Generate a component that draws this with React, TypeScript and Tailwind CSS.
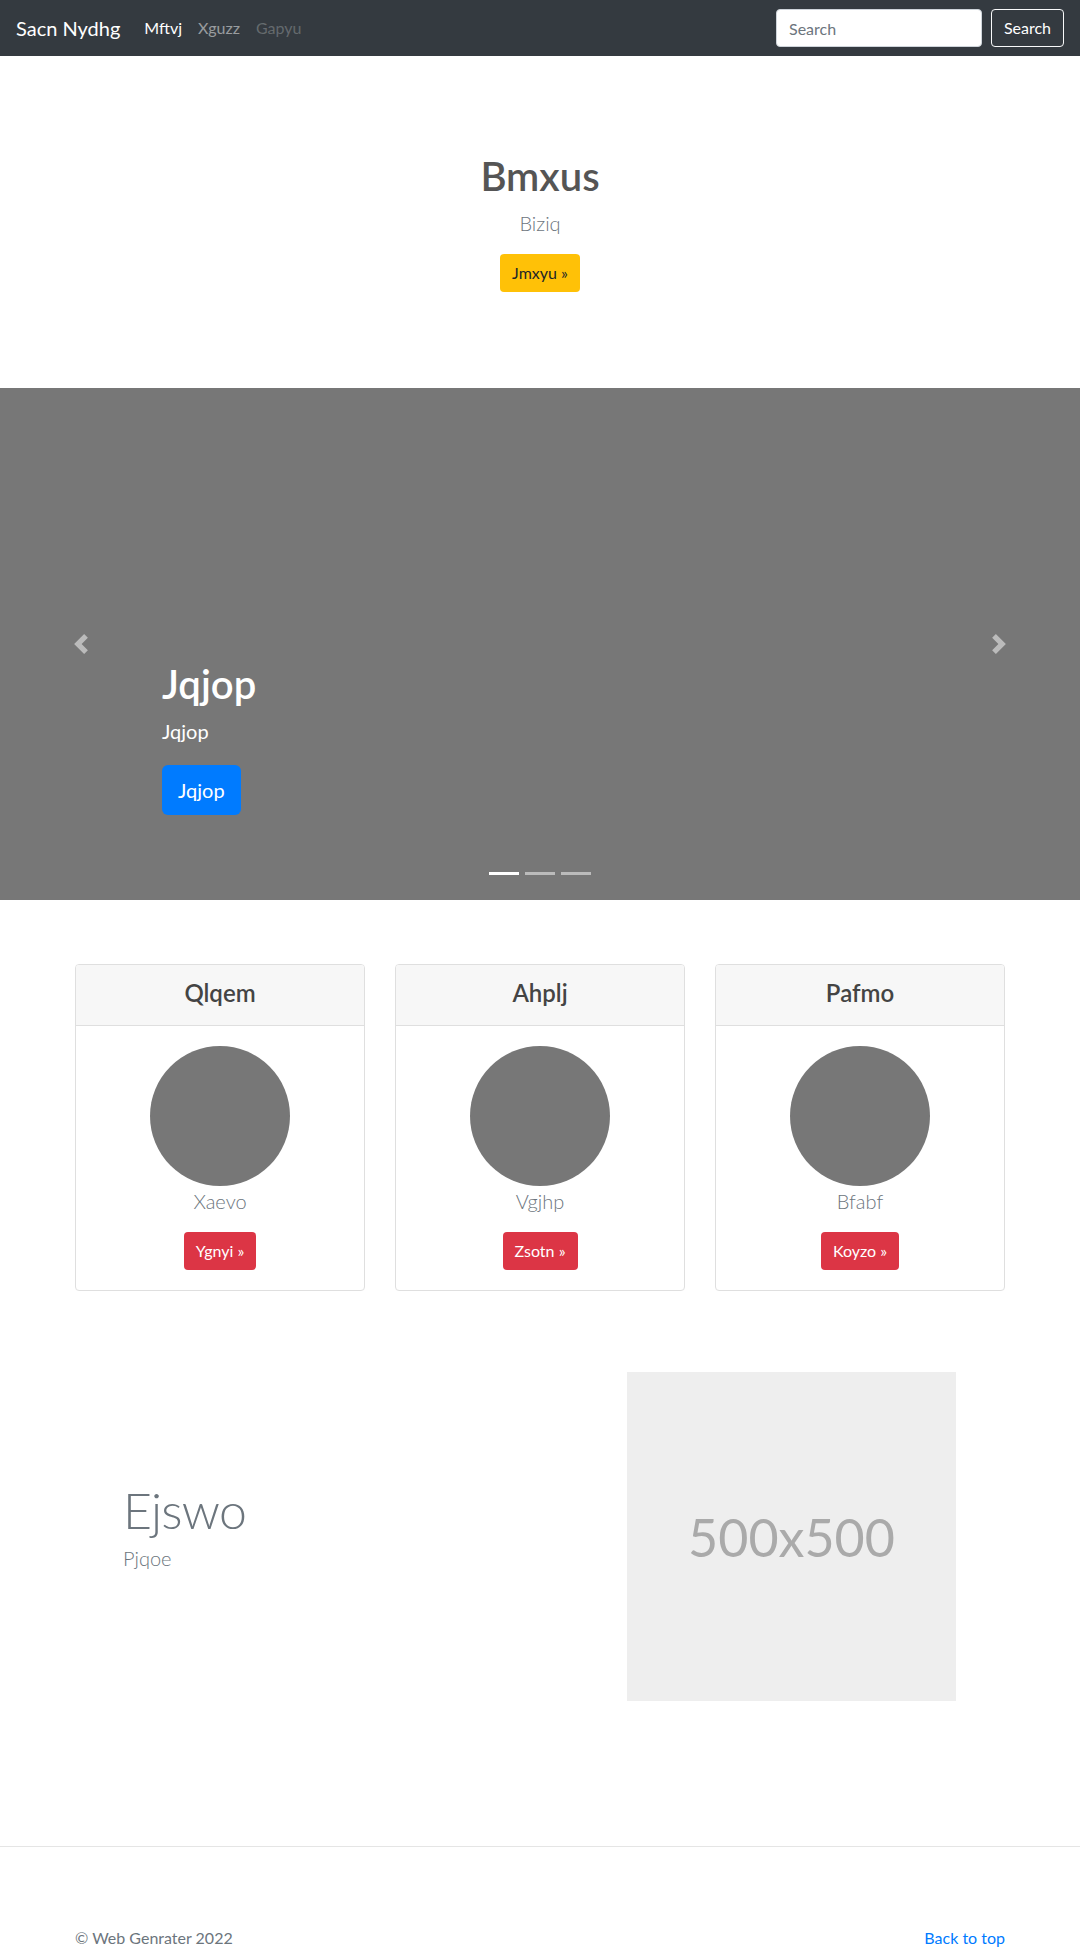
import React from "react";

const cards = [
  { title: "Qlqem", text: "Xaevo", btn: "Ygnyi" },
  { title: "Ahplj", text: "Vgjhp", btn: "Zsotn" },
  { title: "Pafmo", text: "Bfabf", btn: "Koyzo" },
];

function Chevron({ dir }: { dir: "left" | "right" }) {
  return (
    <svg width="20" height="20" viewBox="0 0 8 8" fill="#fff">
      <path
        d={
          dir === "left"
            ? "M5.25 0l-4 4 4 4 1.5-1.5L4.25 4l2.5-2.5L5.25 0z"
            : "M2.75 0l-1.5 1.5L3.75 4l-2.5 2.5L2.75 8l4-4-4-4z"
        }
      />
    </svg>
  );
}

export default function App() {
  return (
    <main className="min-h-screen bg-white font-['Lato','Open_Sans',sans-serif] text-base text-[#212529]">
      {/* Navbar */}
      <nav className="h-14 bg-[#343a40] flex items-center px-4">
        <a className="text-xl leading-[30px] text-white mr-4">Sacn Nydhg</a>
        <div className="flex items-center">
          <a className="px-2 text-white">Mftvj</a>
          <a className="px-2 text-white/50">Xguzz</a>
          <a className="px-2 text-white/25">Gapyu</a>
        </div>
        <form className="ml-auto flex items-center">
          <input
            placeholder="Search"
            className="w-[206px] h-[38px] rounded bg-white px-3 border border-[#ced4da] placeholder:text-[#6c757d] outline-none"
          />
          <button
            type="button"
            className="ml-[9px] w-[73px] h-[38px] rounded border border-[#f8f9fa] text-white"
          >
            Search
          </button>
        </form>
      </nav>

      {/* Hero */}
      <section className="py-24 text-center">
        <h1 className="text-[40px] leading-[1.2] font-semibold text-[#555] mb-2">Bmxus</h1>
        <p className="text-xl leading-[30px] font-light text-[#6c757d] mb-4">Biziq</p>
        <button className="h-[38px] px-3 rounded bg-[#ffc107] text-[#212529]">Jmxyu »</button>
      </section>

      {/* Carousel */}
      <section className="relative h-[512px] bg-[#777]">
        <div className="absolute inset-y-0 left-0 w-[15%] flex items-center justify-center opacity-50">
          <Chevron dir="left" />
        </div>
        <div className="absolute inset-y-0 right-0 w-[15%] flex items-center justify-center opacity-50">
          <Chevron dir="right" />
        </div>
        <div className="absolute left-[15%] right-[15%] bottom-[85px] text-white">
          <h1 className="text-[40px] leading-[1.2] font-semibold mb-2">Jqjop</h1>
          <p className="text-xl leading-[30px] mb-[19px]">Jqjop</p>
          <button className="h-[50px] px-4 rounded-md bg-[#007bff] text-xl text-white">Jqjop</button>
        </div>
        <div className="absolute left-0 right-0 bottom-[25px] flex justify-center gap-[6px]">
          <span className="w-[30px] h-[3px] bg-white" />
          <span className="w-[30px] h-[3px] bg-white/50" />
          <span className="w-[30px] h-[3px] bg-white/50" />
        </div>
      </section>

      {/* Cards */}
      <div className="mx-auto w-[930px] mt-16 grid grid-cols-3 gap-[30px]">
        {cards.map((c) => (
          <div key={c.title} className="border border-[#dfdfdf] rounded overflow-hidden">
            <div className="bg-[#f7f7f7] border-b border-[#dfdfdf] pt-[10px] pb-[14px] text-center">
              <h4 className="text-2xl leading-[36px] font-semibold text-[#444]">{c.title}</h4>
            </div>
            <div className="p-5 flex flex-col items-center">
              <div className="w-[140px] h-[140px] rounded-full bg-[#777]" />
              <p className="text-xl leading-[30px] font-light text-[#6c757d] mb-4">{c.text}</p>
              <button className="h-[38px] px-3 rounded bg-[#dc3545] text-white">{c.btn} »</button>
            </div>
          </div>
        ))}
      </div>

      {/* Featurette */}
      <div className="mx-auto w-[930px] mt-[81px] flex items-start">
        <div className="w-[552px] pl-[48px] mt-[113px]">
          <h2 className="text-[50px] leading-none font-light tracking-[-0.05rem] text-[#6c757d] mb-2">
            Ejswo
          </h2>
          <p className="text-xl leading-[30px] font-light text-[#6c757d]">Pjqoe</p>
        </div>
        <div className="w-[329px] h-[329px] bg-[#eee] flex items-center justify-center text-[52px] text-[#aaa]">
          500x500
        </div>
      </div>

      {/* Footer */}
      <hr className="mt-[145px] border-0 border-t border-[#e5e5e5]" />
      <footer className="mx-auto w-[930px] pt-[79px] pb-8 flex justify-between">
        <p className="text-[#6c757d]">© Web Genrater 2022</p>
        <a className="text-[#007bff]">Back to top</a>
      </footer>
    </main>
  );
}
